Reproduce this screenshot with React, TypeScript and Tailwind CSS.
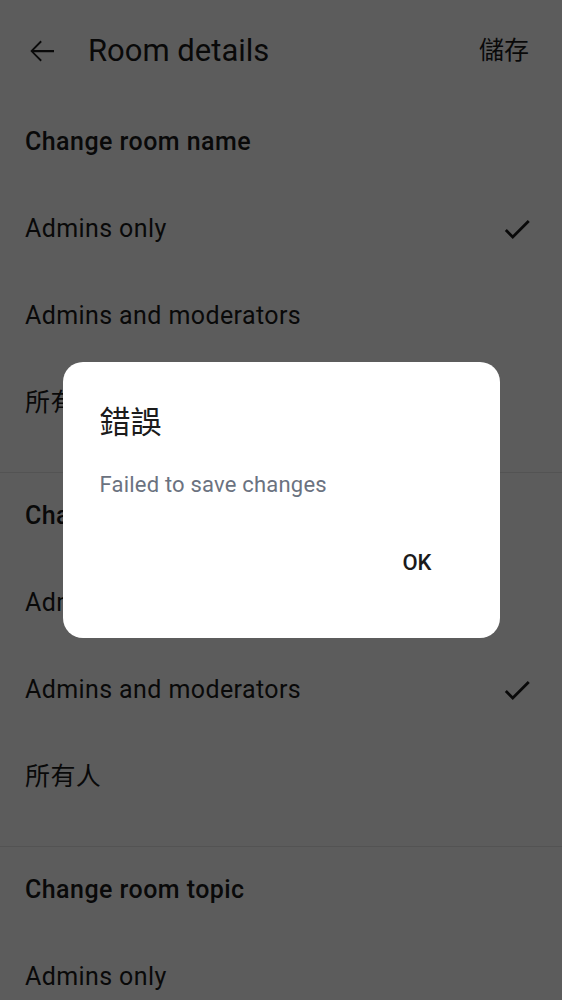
import { Fragment } from "react";

type Section = { title: string; options: string[]; selected: number };

const sections: Section[] = [
  { title: "Change room name", options: ["Admins only", "Admins and moderators", "所有人"], selected: 0 },
  { title: "Change room avatar", options: ["Admins only", "Admins and moderators", "所有人"], selected: 1 },
  // only the first row of this section fits on screen
  { title: "Change room topic", options: ["Admins only"], selected: -1 },
];

const font = "font-['Roboto','Noto_Sans_CJK_TC',sans-serif]";

const CheckIcon = () => (
  <svg width="34" height="34" viewBox="0 0 24 24" fill="currentColor">
    <path d="M9 16.17 4.83 12l-1.42 1.41L9 19 21 7l-1.41-1.41z" />
  </svg>
);

const BackIcon = () => (
  <svg width="36" height="36" viewBox="0 0 24 24" fill="currentColor">
    <path d="M20 11.25H6.6l5.3-5.3-.9-.9L4.2 12l6.8 6.95.9-.9-5.3-5.3H20z" />
  </svg>
);

export default function App() {
  return (
    <div className={`${font} relative h-screen bg-white text-[#1b1b1b] overflow-hidden`}>
      {/* Top bar */}
      <div className="flex h-[99px] items-center pl-6 pr-[33px] pt-[2px]">
        <BackIcon />
        <h1 className="ml-7 flex-1 text-[31px] leading-none">Room details</h1>
        <button className="text-[25px] leading-none">儲存</button>
      </div>

      {sections.map((s, si) => (
        <Fragment key={s.title}>
          {si > 0 && <div className="h-px bg-[#e6e6e6]" />}
          <div>
            <div className="flex h-[86px] items-center px-[25px] text-[25px] font-medium tracking-[0.45px]">
              {s.title}
            </div>
            {s.options.map((o, oi) => (
              <div key={o} className="flex h-[87px] items-center justify-between pl-[25px] pr-[28px] text-[25px] tracking-[0.4px]">
                <span>{o}</span>
                {oi === s.selected && <CheckIcon />}
              </div>
            ))}
            <div className="h-[26px]" />
          </div>
        </Fragment>
      ))}

      {/* Scrim + dialog */}
      <div className="fixed inset-0 z-10 flex items-center justify-center bg-black/[0.64]">
        <div className="-mt-[1px] flex h-[276px] w-[437px] flex-col rounded-[20px] bg-white px-[37px] pt-[45px]">
          <h2 className="text-[31px] leading-none text-[#1b1b1b]">錯誤</h2>
          <p className="mt-[36px] text-[22px] leading-none tracking-[0.2px] text-[#6b7280]">Failed to save changes</p>
          <div className="mt-auto mb-[64px] flex justify-end pr-[31px]">
            <button className="text-[22px] font-medium leading-none text-[#1b1b1b]">OK</button>
          </div>
        </div>
      </div>
    </div>
  );
}
